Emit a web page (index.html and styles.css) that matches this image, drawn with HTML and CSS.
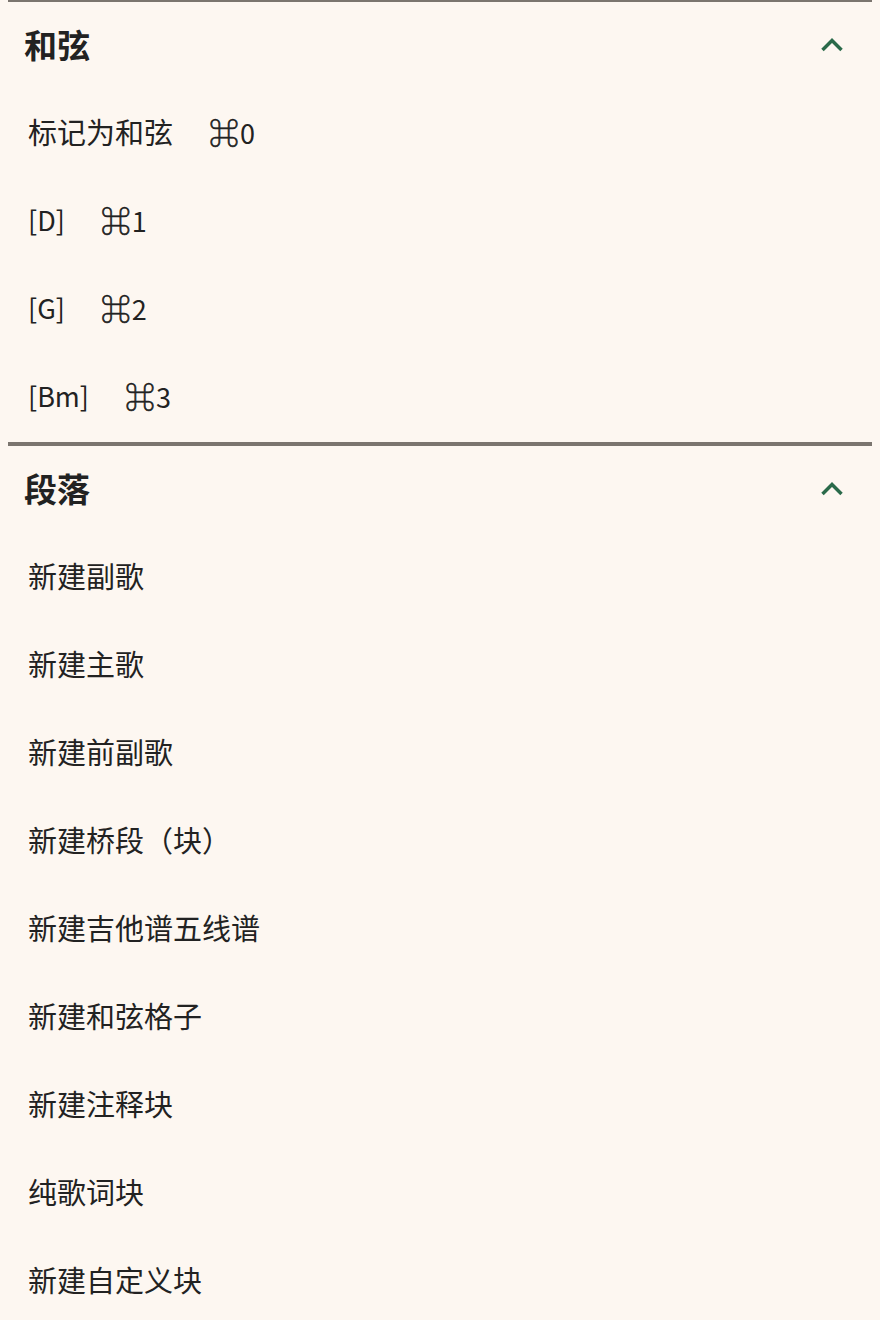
FILE: index.html
```html
<!DOCTYPE html>
<html lang="zh-CN">

<head>
    <meta charset="UTF-8">
    <meta name="viewport" content="width=device-width, initial-scale=1.0">
    <title>插入</title>
    <link rel="stylesheet" href="styles.css">
</head>

<body>
    <!-- 和弦 -->
    <section class="panel panel-first">
        <div class="panel-header">
            <h2>和弦</h2>
            <svg class="chevron" width="24" height="24" viewBox="0 0 24 24">
                <path d="M2.5 17 L12 7.5 L21.5 17" />
            </svg>
        </div>
        <div class="item">标记为和弦<span class="shortcut"><span class="cmd">⌘</span>0</span></div>
        <div class="item"><span class="chord">[D]</span><span class="shortcut"><span class="cmd">⌘</span>1</span></div>
        <div class="item"><span class="chord">[G]</span><span class="shortcut"><span class="cmd">⌘</span>2</span></div>
        <div class="item"><span class="chord">[Bm]</span><span class="shortcut"><span class="cmd">⌘</span>3</span></div>
    </section>

    <!-- 段落 -->
    <section class="panel">
        <div class="panel-header">
            <h2>段落</h2>
            <svg class="chevron" width="24" height="24" viewBox="0 0 24 24">
                <path d="M2.5 17 L12 7.5 L21.5 17" />
            </svg>
        </div>
        <div class="item">新建副歌</div>
        <div class="item">新建主歌</div>
        <div class="item">新建前副歌</div>
        <div class="item">新建桥段（块）</div>
        <div class="item">新建吉他谱五线谱</div>
        <div class="item">新建和弦格子</div>
        <div class="item">新建注释块</div>
        <div class="item">纯歌词块</div>
        <div class="item">新建自定义块</div>
    </section>
</body>

</html>
```

FILE: styles.css
```css
body {
    font-family: "Noto Sans CJK SC", sans-serif;
    margin: 0 8px;
    padding: 0;
    background-color: #fdf7f1;
    color: #222;
    overflow: hidden;
}

.panel {
    border-top: 4px solid #7b756f;
}

.panel-first {
    margin-top: -2px;
}

.panel-header {
    display: flex;
    align-items: center;
    justify-content: space-between;
    height: 88px;
    padding: 0 28px 0 16px;
}

.panel-header h2 {
    margin: -5px 0 0;
    font-size: 33px;
    font-weight: bold;
    color: #222;
}

.chevron {
    display: block;
    margin-top: -2px;
}

.chevron path {
    fill: none;
    stroke: #2a6a4a;
    stroke-width: 3.5;
    stroke-linejoin: miter;
}

.item {
    display: flex;
    align-items: center;
    height: 88px;
    padding: 0 20px 6px;
    box-sizing: border-box;
    font-size: 29px;
}

.chord {
    font-size: 27px;
}

.shortcut {
    margin-left: 36px;
    font-size: 27px;
}

.cmd {
    font-size: 30px;
    -webkit-text-stroke: 0.6px #222;
    margin-right: 1px;
}
```
